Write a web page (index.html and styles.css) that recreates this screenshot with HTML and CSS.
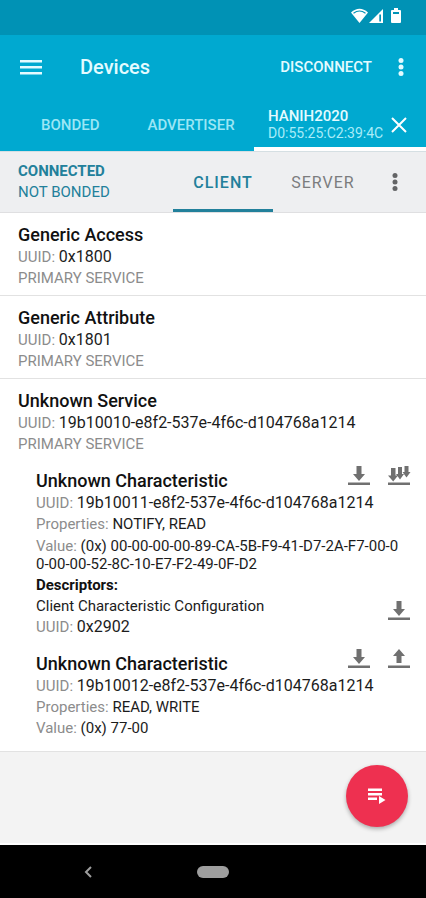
FILE: index.html
```html
<!DOCTYPE html>
<html lang="en">
<head>
<meta charset="utf-8">
<meta name="viewport" content="width=device-width, initial-scale=1">
<title>Devices</title>
<link rel="stylesheet" href="styles.css">
</head>
<body>
<svg class="sprite" aria-hidden="true">
  <symbol id="read" viewBox="0 0 24 24"><path d="M9.500 2h5v8H18l-6 7-6-7h3.500zM1 18.500h22v2.500H1z"/></symbol>
  <symbol id="write" viewBox="0 0 24 24"><path d="M9.500 16h5V9H18l-6-7-6 7h3.500zM1 18.500h22v2.500H1z"/></symbol>
  <symbol id="notify" viewBox="0 0 24 24"><path d="M17.500 2h4v6h2L19.500 13.500 15.500 8h2zM11 3h4v7h2l-4 5.500L9 10h2zM4 4h4.500v7.500H11L6.200 17.500 1 11.500h3zM1 18.500h22v2.500H1z"/></symbol>
  <symbol id="more" viewBox="0 0 6 20"><circle cx="3" cy="3.500" r="2.500"/><circle cx="3" cy="10" r="2.500"/><circle cx="3" cy="16.500" r="2.500"/></symbol>
</svg>
<div class="status">
  <svg class="wifi" viewBox="0 0 17 15"><path d="M0 4.500Q8.500-3 17 4.500L8.500 15z" fill="#fff"/><path d="M2.500 5.200Q8.500.8 14.500 5.200" fill="none" stroke="#0092b5" stroke-width="1.200"/></svg>
  <svg class="signal" viewBox="0 0 14 14"><path d="M14 0v14H0z" fill="#fff"/><path d="M10.300 5.500h1.700v7h-1.700z" fill="#0092b5"/></svg>
  <svg class="battery" viewBox="0 0 10 15"><path d="M3 0h4v2h2q1 0 1 1v11q0 1-1 1H1q-1 0-1-1V3q0-1 1-1h2z" fill="#fff"/><path d="M2 4h6v2H2z" fill="#0092b5"/></svg>
</div>
<header class="appbar">
  <button class="menu" aria-label="Menu"><svg viewBox="0 0 22 16"><path d="M0 1h22v2.500H0zM0 7h22v2.500H0zM0 13h22v2.500H0z"/></svg></button>
  <h1>Devices</h1>
  <button class="disconnect">DISCONNECT</button>
  <button class="overflow" aria-label="More options"><svg><use href="#more"/></svg></button>
</header>
<nav class="tabs">
  <a href="#bonded" class="tab">BONDED</a>
  <a href="#advertiser" class="tab">ADVERTISER</a>
  <div class="tab-active">
    <a href="#device"><strong>HANIH2020</strong><span>D0:55:25:C2:39:4C</span></a>
    <button aria-label="Close"><svg viewBox="0 0 16 16"><path d="M1 1l14 14M15 1L1 15"/></svg></button>
  </div>
</nav>
<section class="subbar">
  <div class="state"><strong>CONNECTED</strong><span>NOT BONDED</span></div>
  <a href="#client" class="side selected">CLIENT</a>
  <a href="#server" class="side">SERVER</a>
  <button class="overflow" aria-label="Connection options"><svg><use href="#more"/></svg></button>
</section>
<main>
  <section class="service">
    <h2>Generic Access</h2>
    <p class="uuid">UUID: <b>0x1800</b></p>
    <p>PRIMARY SERVICE</p>
  </section>
  <section class="service">
    <h2>Generic Attribute</h2>
    <p class="uuid">UUID: <b>0x1801</b></p>
    <p>PRIMARY SERVICE</p>
  </section>
  <section class="service">
    <h2>Unknown Service</h2>
    <p class="uuid">UUID: <b>19b10010-e8f2-537e-4f6c-d104768a1214</b></p>
    <p>PRIMARY SERVICE</p>
    <article class="characteristic">
      <div class="head">
        <h3>Unknown Characteristic</h3>
        <button aria-label="Read"><svg><use href="#read"/></svg></button>
        <button aria-label="Notify"><svg><use href="#notify"/></svg></button>
      </div>
      <p class="uuid">UUID: <b>19b10011-e8f2-537e-4f6c-d104768a1214</b></p>
      <p>Properties: <b>NOTIFY, READ</b></p>
      <p class="value">Value: <b>(0x) 00-00-00-00-89-CA-5B-F9-41-D7-2A-F7-00-00-00-00-52-8C-10-E7-F2-49-0F-D2</b></p>
      <h4>Descriptors:</h4>
      <div class="head">
        <p class="name"><b>Client Characteristic Configuration</b></p>
        <button aria-label="Read descriptor"><svg><use href="#read"/></svg></button>
      </div>
      <p class="uuid">UUID: <b>0x2902</b></p>
    </article>
    <article class="characteristic">
      <div class="head">
        <h3>Unknown Characteristic</h3>
        <button aria-label="Read"><svg><use href="#read"/></svg></button>
        <button aria-label="Write"><svg><use href="#write"/></svg></button>
      </div>
      <p class="uuid">UUID: <b>19b10012-e8f2-537e-4f6c-d104768a1214</b></p>
      <p>Properties: <b>READ, WRITE</b></p>
      <p>Value: <b>(0x) 77-00</b></p>
    </article>
  </section>
</main>
<div class="footer">
  <button class="fab" aria-label="Run macro"><svg viewBox="0 0 18 16"><path d="M0 1h14v2.500H0zM0 5.500h14V8H0zM0 10h9v2.500H0zM11 8.500l6.500 4-6.500 4z"/></svg></button>
</div>
<div class="navbar">
  <button class="back" aria-label="Back"><svg viewBox="0 0 8 12"><path d="M7 1L2 6l5 5"/></svg></button>
  <button class="home" aria-label="Home"></button>
  <span></span>
</div>
</body>
</html>
```
FILE: styles.css
```css
* { box-sizing: border-box; margin: 0; padding: 0; }
body {
  font-family: Roboto, "Liberation Sans", sans-serif;
  font-size: 15px;
  line-height: 21px;
  color: #1c1c1c;
  background: #f3f3f3;
  min-height: 100vh;
  display: flex;
  flex-direction: column;
}
button { border: 0; background: none; font: inherit; color: inherit; display: grid; place-items: center; }
a { color: inherit; text-decoration: none; }
svg { display: block; fill: currentColor; }
.sprite { position: absolute; width: 0; height: 0; }

.status {
  height: 35px;
  padding: 0 25px 4px;
  background: #0092b5;
  display: flex;
  justify-content: flex-end;
  align-items: center;
}
.wifi { width: 17px; height: 15px; }
.signal { width: 14px; height: 14px; margin: 0 8px 0 1px; }
.battery { width: 10px; height: 15px; }

.appbar {
  height: 64px;
  padding: 0 14px 0 20px;
  background: #00a9d0;
  color: #e4fbff;
  display: flex;
  align-items: center;
}
.menu { margin-right: 38px; }
.menu svg { width: 22px; height: 16px; }
h1 { flex: 1; font-size: 20px; font-weight: 500; }
.disconnect { font-weight: 500; }
.overflow { width: 22px; height: 40px; }
.overflow svg { width: 6px; height: 20px; }
.appbar .overflow { margin-left: 18px; }

.tabs {
  height: 52px;
  padding-left: 41px;
  background: #00a9d0;
  color: #9be6f5;
  display: flex;
  font-weight: 500;
}
.tab { display: grid; place-items: center; }
.tab + .tab { margin-left: 48px; }
.tab-active {
  width: 172px;
  margin-left: auto;
  padding: 3px 19px 0 14px;
  border-bottom: 4px solid #fff;
  display: flex;
  align-items: center;
  justify-content: space-between;
  color: #e4fbff;
}
.tab-active strong, .tab-active span, .state strong, .state span { display: block; }
.tab-active strong { font-weight: 500; line-height: 17px; }
.tab-active span { font-size: 14px; font-weight: 400; line-height: 16px; color: #a9ecf8; }
.tab-active svg { width: 16px; height: 16px; stroke: #fff; stroke-width: 2; }

.subbar {
  height: 62px;
  padding: 0 20px 0 18px;
  background: #eeeff1;
  border-top: 1px solid #d5dfe3;
  border-bottom: 1px solid #dfdfe1;
  color: #7b7c7e;
  display: flex;
  align-items: center;
}
.state { flex: 1; color: #22809b; }
.state strong { font-weight: 700; }
.side {
  width: 100px;
  align-self: stretch;
  display: grid;
  place-items: center;
  font-size: 16px;
  letter-spacing: 1px;
}
.side.selected { color: #22809b; border-bottom: 3px solid #22809b; border-top: 3px solid transparent; font-weight: 500; }
.subbar .overflow { margin-left: 11px; color: #636466; }

main { background: #fff; padding-bottom: 6px; border-bottom: 1px solid #e2e2e2; }
.service { padding: 10px 15px 6px 18px; }
.service + .service { border-top: 1px solid #e2e2e2; }
h2, h3 { font-size: 18px; font-weight: 500; line-height: 24px; color: #111; }
h3 { line-height: 25px; }
h4 { font-size: 15px; font-weight: 700; line-height: 21px; color: #111; }
p { color: #8c8c8c; }
p b { font-weight: 400; color: #1c1c1c; }
.uuid b { font-size: 16px; line-height: 16px; }
.characteristic { padding: 13px 0 0 18px; }
.value { word-break: break-all; line-height: 18px; padding: 2px 8px 2px 0; }
.head { display: flex; gap: 16px; }
.head h3, .name { flex: 1; }
.head button { height: 24px; margin-top: -4px; color: #707070; }
.head svg { width: 24px; height: 24px; }
.head .name + button { margin: 3px 0 -6px; }

.footer {
  flex: 1;
  min-height: 90px;
  padding: 0 18px 4px;
  border-bottom: 2px solid #fff;
  display: flex;
  align-items: center;
  justify-content: flex-end;
}
.fab {
  width: 62px;
  height: 62px;
  border-radius: 50%;
  background: #ee3050;
  color: #fff;
  box-shadow: 0 2px 4px rgba(0, 0, 0, .3);
}
.fab svg { width: 18px; height: 17px; }
.navbar {
  height: 53px;
  padding: 0 84px;
  background: #000;
  color: #9e9e9e;
  display: grid;
  grid-template-columns: 1fr auto 1fr;
  align-items: center;
}
.back { justify-self: start; }
.back svg { width: 8px; height: 12px; fill: none; stroke: currentColor; stroke-width: 2; }
.home { width: 32px; height: 12px; border-radius: 6px; background: #9e9e9e; }
```
